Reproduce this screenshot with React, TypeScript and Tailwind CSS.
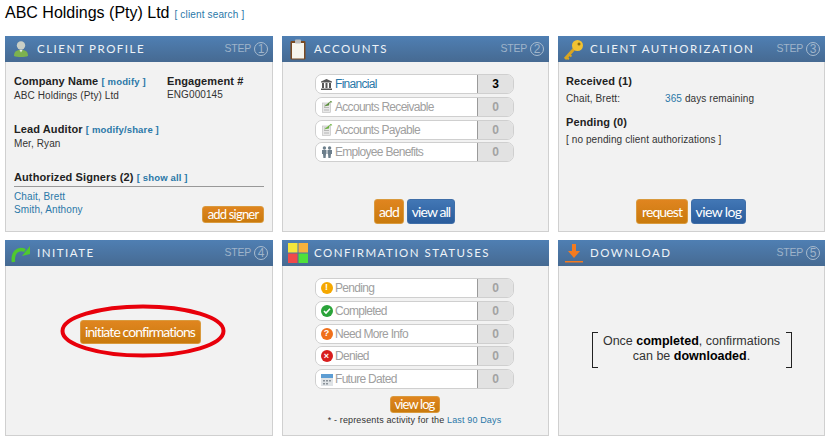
import React from "react";

const arial = "font-['Liberation_Sans',Arial,sans-serif]";
const lato = "font-['Lato',sans-serif]";
const heading = "text-[11px] font-bold leading-[12px] tracking-[0.1px] text-[#222]";

function Btn({ children, blue, small, track = "tracking-[-0.9px]", className = "" }: { children: React.ReactNode; blue?: boolean; small?: boolean; track?: string; className?: string }) {
  return (
    <button
      className={`${lato} flex items-center justify-center rounded-[3px] border text-white ${track} ${
        blue
          ? "border-[#3f6ea8] bg-gradient-to-b from-[#4277b5] to-[#2a5c9c]"
          : "border-[#d99a3e] bg-gradient-to-b from-[#e0851f] to-[#c97a0c]"
      } ${small ? "text-[13px]" : "text-[14px]"} ${className}`}
    >
      {children}
    </button>
  );
}

function Panel({ icon, title, step, children, className = "" }: { icon: React.ReactNode; title: string; step?: number; children: React.ReactNode; className?: string }) {
  return (
    <section className="flex h-[196px] flex-col border border-[#d0d0d0] bg-[#f2f2f2]">
      <header className="-mx-px -mt-px flex h-[26px] shrink-0 items-center bg-gradient-to-b from-[#4f7fb3] to-[#466a92] pr-[5px]">
        <span className="flex w-[32px] shrink-0 justify-center">{icon}</span>
        <h2 className={`${lato} text-[11.5px] font-normal uppercase tracking-[1.5px] text-[#eef3f8]`}>{title}</h2>
        {step !== undefined && (
          <span className={`${arial} ml-auto flex items-center gap-[3px] text-[10.5px] tracking-[-0.2px] text-[#9fb4ca]`}>
            STEP
            <span className="flex h-[14px] w-[14px] items-center justify-center rounded-full border border-[#a9bccf] text-[12px] tracking-normal">{step}</span>
          </span>
        )}
      </header>
      <div className={`flex min-h-0 flex-1 flex-col ${className}`}>{children}</div>
    </section>
  );
}

function CountRow({ icon, label, n, active }: { icon: React.ReactNode; label: string; n: number; active?: boolean }) {
  return (
    <div className="flex h-[20px] w-[199px] overflow-hidden rounded-[7px] border border-[#cfcfcf]">
      <div className={`${arial} flex flex-1 items-center gap-[2px] border-r border-r-[#9a9a9a] bg-white pl-[4px] text-[12px] tracking-[-0.7px] ${active ? "text-[#2a78a8]" : "text-[#a0a0a0]"}`}>
        <span className="flex w-[13px] shrink-0 justify-center">{icon}</span>
        {label}
      </div>
      <div className={`${arial} flex w-[35px] items-center justify-center bg-[#e2e2e2] text-[12px] font-bold ${active ? "text-black" : "text-[#a3a3a3]"}`}>{n}</div>
    </div>
  );
}

const Bank = () => (
  <svg width="11" height="11" viewBox="0 0 11 11" fill="#555"><path d="M5.5 0 11 2.5V3.5H0V2.5z" /><rect x="1" y="4" width="2" height="5" /><rect x="4.5" y="4" width="2" height="5" /><rect x="8" y="4" width="2" height="5" /><rect x="0" y="9.5" width="11" height="1.5" /></svg>
);
const Doc = ({ c }: { c: string }) => (
  <svg width="12" height="13" viewBox="0 0 12 13"><rect x="1.5" y="3" width="8" height="9.5" fill="#e8e8e8" stroke="#bbb" strokeWidth=".6" /><path d="M3 5h5M3 7.5h5M3 10h5" stroke="#aaa" strokeWidth=".8" /><path d="M3 6.5 10 0.8l1.3 1.4-3 .6-.2 2.5z" fill={c} /></svg>
);
const People = () => (
  <svg width="12" height="12" viewBox="0 0 12 12" fill="#6d7f8c"><circle cx="3.4" cy="2" r="1.7" /><circle cx="8.6" cy="2" r="1.7" /><path d="M1 4h4.500v4H5l-.4 4H2.400L2 8H1zM6.500 4H11v4h-1l-.4 4H7.400L7 8h-.5z" /></svg>
);
const Dot = ({ c, ch }: { c: string; ch: string }) => (
  <span className={`${arial} flex h-[12px] w-[12px] items-center justify-center rounded-full text-[9px] font-bold tracking-normal text-white`} style={{ backgroundColor: c }}>{ch}</span>
);
const Check = () => (
  <span className="flex h-[12px] w-[12px] items-center justify-center rounded-full bg-[#2aa33a]">
    <svg width="8" height="8" viewBox="0 0 8 8" fill="none" stroke="#fff" strokeWidth="1.6"><path d="M1 4l2 2 4-4.200" /></svg>
  </span>
);
const Cal = () => (
  <svg width="12" height="13" viewBox="0 0 12 13"><rect x="0" y="1" width="12" height="12" fill="#dfe3e6" /><rect x="0" y="1" width="12" height="4" fill="#5d9dd3" /><path d="M2 7h2v1.500H2zM5 7h2v1.500H5zM8 7h2v1.500H8zM2 10h2v1.500H2zM5 10h2v1.500H5z" fill="#8a9299" /></svg>
);

const Link = ({ children }: { children: React.ReactNode }) => (
  <span className="text-[9.5px] font-bold tracking-[0.15px] text-[#2a78a8]">{children}</span>
);

function Profile() {
  return (
    <Panel
      title="Client Profile"
      step={1}
      className={`${arial} px-[8px] pt-[13px] text-[10px] leading-[13px] tracking-[0.1px] text-[#333]`}
      icon={
        <svg width="14" height="16" viewBox="0 0 14 16"><circle cx="7" cy="4.500" r="4.200" fill="#c9cfc6" /><path d="M0 15c0-4.500 2.500-6 7-6s7 1.500 7 6c-3 1.300-11 1.300-14 0z" fill="#7db24e" /><path d="M5.500 9h3L7 11.500z" fill="#e8eee4" /></svg>
      }
    >
      <div className="flex">
        <div className="w-[153px]">
          <h3 className={heading}>Company Name <Link>[ modify ]</Link></h3>
          <p className="mt-[1px]">ABC Holdings (Pty) Ltd</p>
        </div>
        <div>
          <h3 className={heading}>Engagement #</h3>
          <p className="mt-[1px]">ENG000145</p>
        </div>
      </div>
      <div className="mt-[21px]">
        <h3 className={heading}>Lead Auditor <Link>[ modify/share ]</Link></h3>
        <p className="mt-[1px]">Mer, Ryan</p>
      </div>
      <div className="mt-[21px]">
        <h3 className={`${heading} border-b border-[#999] pb-[2px]`}>Authorized Signers (2) <Link>[ show all ]</Link></h3>
        <div className="flex items-start justify-between">
          <div className="mt-[3px] text-[#2a78a8]">
            <p>Chait, Brett</p>
            <p>Smith, Anthony</p>
          </div>
          <Btn small track="tracking-[-0.8px]" className="mt-[19px] h-[17px] w-[62px]">add signer</Btn>
        </div>
      </div>
    </Panel>
  );
}

function Accounts() {
  return (
    <Panel
      title="Accounts"
      step={2}
      className="items-center pb-[7px] pr-[2px] pt-[12px]"
      icon={
        <svg width="16" height="21" viewBox="0 0 16 21"><rect x="0.500" y="2" width="15" height="18.500" rx="1" fill="#7a4a22" /><rect x="2" y="4" width="12" height="15.500" fill="#f7f5ee" /><rect x="5" y="0.500" width="6" height="4" rx="1" fill="#bcbcbc" /></svg>
      }
    >
      <div className="flex flex-col gap-[2.8px]">
        <CountRow icon={<Bank />} label="Financial" n={3} active />
        <CountRow icon={<Doc c="#5a8f3a" />} label="Accounts Receivable" n={0} />
        <CountRow icon={<Doc c="#6db33f" />} label="Accounts Payable" n={0} />
        <CountRow icon={<People />} label="Employee Benefits" n={0} />
      </div>
      <div className="mt-auto flex gap-[3px]">
        <Btn className="h-[25px] w-[30px]">add</Btn>
        <Btn blue className="h-[25px] w-[48px]">view all</Btn>
      </div>
    </Panel>
  );
}

function Authorization() {
  return (
    <Panel
      title="Client Authorization"
      step={3}
      className={`${arial} pb-[7px] pl-[7px] pr-[8px] pt-[13px] text-[10px] leading-[13px] tracking-[0.1px] text-[#333]`}
      icon={
        <svg width="20" height="21" viewBox="0 0 20 21"><path d="M1 20 10 10" stroke="#d9a520" strokeWidth="3" /><path d="M3 19l2 1M5.500 16l2 1.500" stroke="#d9a520" strokeWidth="2" /><circle cx="13.500" cy="6.500" r="5.500" fill="#f1c232" /><circle cx="15" cy="5" r="1.500" fill="#8a6a10" /></svg>
      }
    >
      <h3 className={heading}>Received (1)</h3>
      <p className="mt-[5px] flex"><span className="w-[99px]">Chait, Brett:</span><span><span className="text-[#2a78a8]">365</span> days remaining</span></p>
      <h3 className={`${heading} mt-[11px]`}>Pending (0)</h3>
      <p className="mt-[5px]">[ no pending client authorizations ]</p>
      <div className="mt-auto flex justify-center gap-[3px]">
        <Btn className="h-[25px] w-[52px]">request</Btn>
        <Btn blue track="tracking-[-0.6px]" className="h-[25px] w-[55px]">view log</Btn>
      </div>
    </Panel>
  );
}

function Initiate() {
  return (
    <Panel
      title="Initiate"
      step={4}
      className="items-center justify-center pb-[38px] pl-[2px]"
      icon={
        <svg width="20" height="19" viewBox="0 0 20 19" fill="none"><path d="M2.500 18C1 9 7 3 14 6.500" stroke="#4fc92f" strokeWidth="3.500" /><path d="M11 12 19 10V2z" fill="#4fc92f" /></svg>
      }
    >
      <div className="relative">
        <Btn className="h-[24px] w-[121px]">initiate confirmations</Btn>
        <svg className="absolute -left-[20px] -top-[16px]" width="166" height="54" viewBox="0 0 166 54" fill="none"><ellipse cx="83" cy="27" rx="80.500" ry="24.500" stroke="#e8000b" strokeWidth="4" /></svg>
      </div>
    </Panel>
  );
}

function Statuses() {
  return (
    <Panel
      title="Confirmation Statuses"
      className="items-center pr-[2px] pt-[12px]"
      icon={
        <svg width="20" height="20" viewBox="0 0 20 20"><rect width="9.500" height="9.500" fill="#f5e63c" /><rect x="10.500" width="9.500" height="9.500" fill="#f7b23c" /><rect y="10.500" width="9.500" height="9.500" fill="#f04a4a" /><rect x="10.500" y="10.500" width="9.500" height="9.500" fill="#4fe03a" /></svg>
      }
    >
      <div className="flex flex-col gap-[2.8px]">
        <CountRow icon={<Dot c="#f5a800" ch="!" />} label="Pending" n={0} />
        <CountRow icon={<Check />} label="Completed" n={0} />
        <CountRow icon={<Dot c="#f0701a" ch="?" />} label="Need More Info" n={0} />
        <CountRow icon={<Dot c="#d81e1e" ch="×" />} label="Denied" n={0} />
        <CountRow icon={<Cal />} label="Future Dated" n={0} />
      </div>
      <Btn small className="mt-[7px] h-[17px] w-[50px]">view log</Btn>
      <p className={`${arial} text-[9px] leading-[14px] tracking-[0.15px] text-[#333]`}>* - represents activity for the <span className="text-[#2a78a8]">Last 90 Days</span></p>
    </Panel>
  );
}

function Download() {
  return (
    <Panel
      title="Download"
      step={5}
      className="items-center justify-center pb-[1px]"
      icon={
        <svg width="18" height="19" viewBox="0 0 18 19" fill="#f47b20"><path d="M7 0h4v7h4l-6 7-6-7h4z" /><rect y="17" width="18" height="1.500" /></svg>
      }
    >
      <div className={`${arial} relative h-[36px] w-[200px] border-x border-[#222] text-center text-[12.5px] leading-[15px] text-[#333]`}>
        <span className="absolute left-0 top-0 h-px w-[5px] bg-[#222]" />
        <span className="absolute bottom-0 left-0 h-px w-[5px] bg-[#222]" />
        <span className="absolute right-0 top-0 h-px w-[5px] bg-[#222]" />
        <span className="absolute bottom-0 right-0 h-px w-[5px] bg-[#222]" />
        <p className="pt-[2px]">Once <b className="text-black">completed</b>, confirmations</p>
        <p>can be <b className="text-black">downloaded</b>.</p>
      </div>
    </Panel>
  );
}

export default function App() {
  return (
    <div className="h-[443px] w-[830px] overflow-hidden bg-white pl-[5px]">
      <div className={`${arial} flex h-[36px] items-start pt-[4px] text-[16px] leading-[18px] text-black`}>
        ABC Holdings (Pty) Ltd
        <span className="ml-[5px] pt-[4px] text-[10px] leading-[13px] tracking-[0.15px] text-[#2a78a8]">[ client search ]</span>
      </div>
      <main className="grid grid-cols-[268px_267px_267px] gap-x-[9px] gap-y-[8px]">
        <Profile />
        <Accounts />
        <Authorization />
        <Initiate />
        <Statuses />
        <Download />
      </main>
    </div>
  );
}
